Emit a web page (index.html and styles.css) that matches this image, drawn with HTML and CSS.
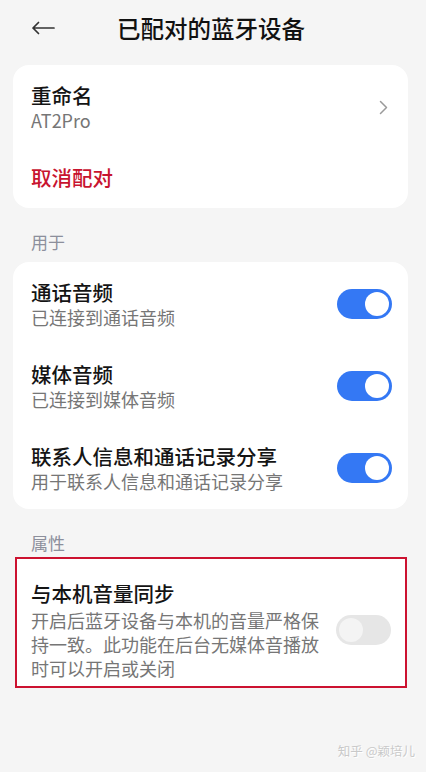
FILE: index.html
```html
<!DOCTYPE html>
<html lang="zh-CN">
<head>
    <meta charset="UTF-8">
    <meta name="viewport" content="width=device-width, initial-scale=1.0">
    <title>已配对的蓝牙设备</title>
    <link rel="stylesheet" href="styles.css">
</head>
<body>
    <div class="page">
        <div class="header">
            <span class="back">
                <svg width="24" height="14" viewBox="0 0 24 14">
                    <path d="M23 7H2M7.5 1.5L2 7l5.5 5.5" fill="none" stroke="#333" stroke-width="1.7" stroke-linecap="round" stroke-linejoin="round"/>
                </svg>
            </span>
            <h1 class="title">已配对的蓝牙设备</h1>
        </div>

        <div class="card">
            <div class="rename">
                <div class="text">
                    <div class="item-title">重命名</div>
                    <div class="item-sub">AT2Pro</div>
                </div>
                <svg class="chevron" width="9" height="15" viewBox="0 0 9 15">
                    <path d="M1.5 1.5l6 6-6 6" fill="none" stroke="#9a9a9a" stroke-width="1.5" stroke-linecap="round" stroke-linejoin="round"/>
                </svg>
            </div>
            <div class="unpair">取消配对</div>
        </div>

        <div class="section-label">用于</div>
        <div class="card list">
            <div class="row">
                <div class="text">
                    <div class="item-title">通话音频</div>
                    <div class="item-sub">已连接到通话音频</div>
                </div>
                <span class="switch on"></span>
            </div>
            <div class="row">
                <div class="text">
                    <div class="item-title">媒体音频</div>
                    <div class="item-sub">已连接到媒体音频</div>
                </div>
                <span class="switch on"></span>
            </div>
            <div class="row">
                <div class="text">
                    <div class="item-title">联系人信息和通话记录分享</div>
                    <div class="item-sub">用于联系人信息和通话记录分享</div>
                </div>
                <span class="switch on"></span>
            </div>
        </div>

        <div class="section-label">属性</div>
        <div class="card marked">
            <div class="row">
                <div class="text">
                    <div class="item-title">与本机音量同步</div>
                    <div class="item-sub desc">开启后蓝牙设备与本机的音量严格保持一致。此功能在后台无媒体音播放时可以开启或关闭</div>
                </div>
                <span class="switch"></span>
            </div>
        </div>

        <div class="watermark">知乎 @颖培儿</div>
    </div>
</body>
</html>
```

FILE: styles.css
```css
body {
    margin: 0;
    background-color: #f5f5f5;
    font-family: "Noto Sans CJK SC", "Noto Sans", sans-serif;
    color: #141414;
}
.page {
    position: relative;
    min-height: 100vh;
    overflow: hidden;
}
.header {
    display: flex;
    align-items: center;
    height: 56px;
    padding-left: 31px;
}
.back {
    display: flex;
    width: 24px;
}
.title {
    margin: 0 0 0 62px;
    font-size: 23.5px;
    font-weight: 500;
    line-height: 30px;
    color: #111;
}
.card {
    background-color: #fff;
    border-radius: 16px;
    margin: 9px 18px 0 13px;
}
.text {
    flex: 1;
}
.item-title {
    font-size: 20.5px;
    font-weight: 500;
    line-height: 26px;
}
.item-sub {
    font-size: 18px;
    line-height: 24px;
    color: #767676;
}
.rename {
    display: flex;
    align-items: center;
    padding: 17px 20px 0 18px;
}
.unpair {
    padding: 32px 18px 18px;
    font-size: 20.5px;
    font-weight: 500;
    line-height: 26px;
    color: #c8142f;
}
.section-label {
    margin: 23px 0 0 31px;
    font-size: 17px;
    line-height: 22px;
    color: #8c8f9c;
}
.list {
    padding-top: 1px;
}
.row {
    display: flex;
    align-items: center;
    padding: 16px 16px 16px 18px;
}
.switch {
    position: relative;
    flex-shrink: 0;
    width: 55px;
    height: 30px;
    border-radius: 15px;
    background-color: #e6e6e6;
}
.switch::after {
    content: "";
    position: absolute;
    top: 3px;
    left: 3px;
    width: 24px;
    height: 24px;
    border-radius: 50%;
    background-color: #f4f4f4;
}
.switch.on {
    background-color: #3478f4;
}
.switch.on::after {
    left: 28px;
    background-color: #fff;
}
.marked {
    border-radius: 0;
    border: 2px solid #cc1230;
    margin: 3px 19px 0 15px;
}
.marked .row {
    padding: 21px 14px 6px 14px;
}
.marked .item-title {
    margin-bottom: 2px;
}
.desc {
    max-width: 292px;
    line-height: 24px;
}
.watermark {
    position: absolute;
    right: 11px;
    bottom: 12px;
    font-size: 12.5px;
    color: #c9c9c9;
    text-shadow: 1px 1px 0 #fff;
}
```
